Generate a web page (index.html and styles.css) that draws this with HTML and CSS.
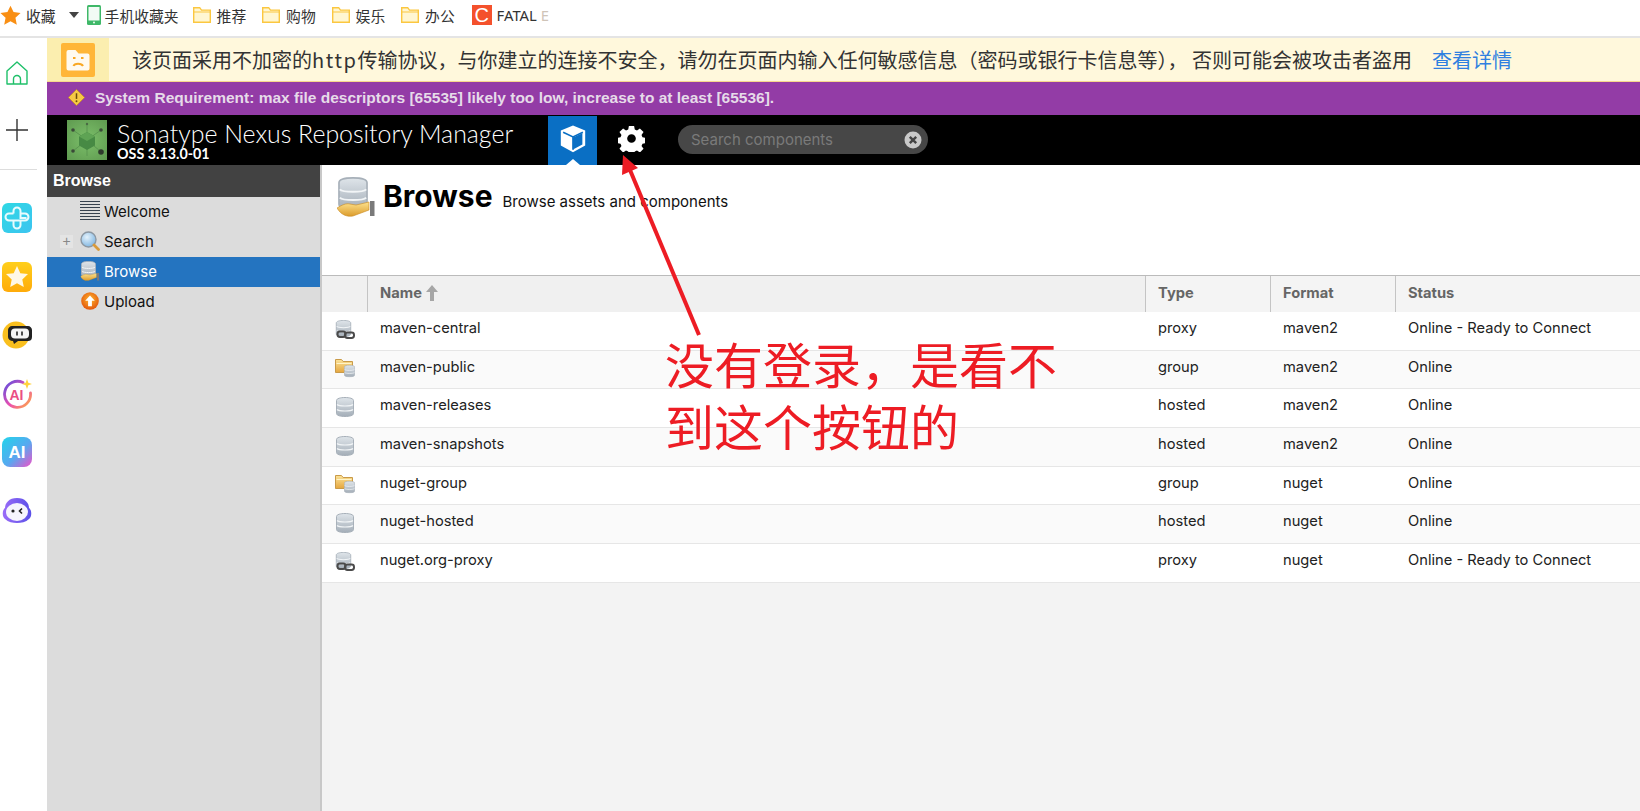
FILE: index.html
```html
<!DOCTYPE html>
<html lang="zh">
<head>
<meta charset="utf-8">
<title>Sonatype Nexus Repository Manager</title>
<link rel="stylesheet" href="styles.css">
</head>
<body>
<svg class="defs" width="0" height="0" aria-hidden="true">
  <defs>
    <linearGradient id="gDb" x1="0" y1="0" x2="0" y2="1"><stop offset="0" stop-color="#dfe5ea"/><stop offset="1" stop-color="#a4aeb8"/></linearGradient>
    <linearGradient id="gFolder" x1="0" y1="0" x2="0" y2="1"><stop offset="0" stop-color="#fbe39a"/><stop offset="1" stop-color="#e5a63e"/></linearGradient>
    <linearGradient id="gHand" x1="0" y1="0" x2="0" y2="1"><stop offset="0" stop-color="#fde28e"/><stop offset="1" stop-color="#dc9c2c"/></linearGradient>
    <linearGradient id="gTeal" x1="0" y1="0" x2="1" y2="1"><stop offset="0" stop-color="#2fd8e4"/><stop offset="1" stop-color="#3cc4f0"/></linearGradient>
    <linearGradient id="gGold" x1="0" y1="0" x2="0" y2="1"><stop offset="0" stop-color="#ffcf1c"/><stop offset="1" stop-color="#ffab0a"/></linearGradient>
    <linearGradient id="gRing" x1="0" y1="0" x2="1" y2="1"><stop offset="0" stop-color="#5a4fe0"/><stop offset=".55" stop-color="#ec4fb0"/><stop offset="1" stop-color="#ffb03c"/></linearGradient>
    <linearGradient id="gAi" x1="0" y1="0" x2="1" y2="1"><stop offset="0" stop-color="#22d4ea"/><stop offset=".55" stop-color="#58a8f0"/><stop offset="1" stop-color="#f050c8"/></linearGradient>
    <linearGradient id="gBot" x1="0" y1="0" x2="1" y2="0"><stop offset="0" stop-color="#9a6cf8"/><stop offset="1" stop-color="#5a50e8"/></linearGradient>
    <radialGradient id="gUp" cx=".5" cy=".4" r=".6"><stop offset="0" stop-color="#ffb52e"/><stop offset="1" stop-color="#e2560c"/></radialGradient>
    <radialGradient id="gLens" cx=".4" cy=".35" r=".7"><stop offset="0" stop-color="#e4f2fc"/><stop offset="1" stop-color="#7db4e0"/></radialGradient>
    <radialGradient id="gLogo" cx=".5" cy=".5" r=".7"><stop offset="0" stop-color="#7cc06a"/><stop offset="1" stop-color="#5f9a50"/></radialGradient>
    <symbol id="db" viewBox="0 0 18 20">
      <path d="M.5 3.500C.5 1.500 4.500.5 9 .5s8.500 1 8.500 3v13c0 2-4 3-8.500 3s-8.500-1-8.500-3z" fill="url(#gDb)" stroke="#a7b0b9"/>
      <path d="M1 7.500c2 2 14 2 16 0M1 12.500c2 2 14 2 16 0" fill="none" stroke="#f2f5f7" stroke-width="1.200"/>
    </symbol>
    <symbol id="proxy" viewBox="0 0 20 20">
      <use href="#db" width="17" height="17" x="0" y="0"/>
      <rect x="2.500" y="11.500" width="8" height="5.500" rx="2.400" fill="none" stroke="#4a4a4a" stroke-width="2"/>
      <rect x="10" y="12.500" width="9" height="5.500" rx="2.400" fill="none" stroke="#4a4a4a" stroke-width="2"/>
    </symbol>
    <symbol id="group" viewBox="0 0 20 20">
      <path d="M.5 1.500h6l1.600 2h9.400v11H.5z" fill="url(#gFolder)" stroke="#c99a48"/>
      <path d="M1.500 5.500h15" stroke="#fff4c8"/>
      <use href="#db" width="11" height="13" x="9" y="6.500"/>
    </symbol>
    <symbol id="store" viewBox="0 0 38 40">
      <use href="#db" width="30" height="33" x="1" y="0"/>
      <path d="M0 31c5-3 9-5 13-4l6 1 13-3v8l-8 3-8 3c-6 1-12-1-16-8z" fill="url(#gHand)" stroke="#c98a20" stroke-width=".6"/>
      <rect x="33" y="24" width="4.500" height="15" fill="#7a7a7a"/>
    </symbol>
  </defs>
</svg>

<header class="bookmarks">
  <svg class="star" viewBox="0 0 20 20"><path d="M10 .6l2.900 6.100 6.700.8-4.900 4.600 1.300 6.600L10 15.400l-6 3.300 1.300-6.600L.4 7.500l6.700-.8z" fill="#f98f14"/></svg>
  <span class="bm bm-fav">收藏</span>
  <span class="caret"></span>
  <svg class="phone" viewBox="0 0 14 20"><rect width="14" height="20" rx="1.500" fill="#3fb868"/><rect x="1.500" y="2" width="11" height="13.500" fill="#f2fbf5"/><circle cx="7" cy="17.500" r=".9" fill="#fff"/></svg>
  <span class="bm bm-mobile">手机收藏夹</span>
  <span class="bm-folder"><svg class="ficon" viewBox="0 0 18 16"><path d="M.7.7h6l1.800 2.400h8.800v12.200H.7z" fill="#fff6d2" stroke="#fbc740" stroke-width="1.400"/><path d="M1 5h16" stroke="#fbc740"/></svg>推荐</span>
  <span class="bm-folder"><svg class="ficon" viewBox="0 0 18 16"><path d="M.7.7h6l1.800 2.400h8.800v12.200H.7z" fill="#fff6d2" stroke="#fbc740" stroke-width="1.400"/><path d="M1 5h16" stroke="#fbc740"/></svg>购物</span>
  <span class="bm-folder"><svg class="ficon" viewBox="0 0 18 16"><path d="M.7.7h6l1.800 2.400h8.800v12.200H.7z" fill="#fff6d2" stroke="#fbc740" stroke-width="1.400"/><path d="M1 5h16" stroke="#fbc740"/></svg>娱乐</span>
  <span class="bm-folder"><svg class="ficon" viewBox="0 0 18 16"><path d="M.7.7h6l1.800 2.400h8.800v12.200H.7z" fill="#fff6d2" stroke="#fbc740" stroke-width="1.400"/><path d="M1 5h16" stroke="#fbc740"/></svg>办公</span>
  <span class="fatal-ic">C</span>
  <span class="fatal">FATAL <span class="fade">E</span></span>
</header>

<div class="shell">
  <aside class="rail">
    <svg class="rail-home" viewBox="0 0 22 24"><path d="M1 10L11 1l10 9v13H1z" fill="none" stroke="#1fc06a" stroke-width="1.400" stroke-linejoin="round"/><path d="M7.500 23v-5a3.500 3.500 0 017 0v5" fill="none" stroke="#1fc06a" stroke-width="1.400"/></svg>
    <svg class="rail-plus" viewBox="0 0 22 22"><path d="M11 0v22M0 11h22" stroke="#333" stroke-width="1.400"/></svg>
    <div class="rail-sep"></div>
    <div class="rail-apps">
      <svg viewBox="0 0 30 30"><rect width="30" height="30" rx="6" fill="url(#gTeal)"/><path d="M11.500 10.500V8a3.500 3.500 0 017 0v7h6a3.500 3.500 0 010 0M18.500 10.500H23a3.500 3.500 0 010 7h-5M11.500 10.500H7a3.500 3.500 0 000 7h4.500V22a3.500 3.500 0 007 0v-4.500h-7" fill="none" stroke="#e8fbfd" stroke-width="2"/></svg>
      <svg viewBox="0 0 30 30"><rect width="30" height="30" rx="6" fill="url(#gGold)"/><path d="M15 4l3.300 7.200 7.700.9-5.700 5.300 1.500 7.700L15 21.300l-6.800 3.800 1.500-7.700L4 12.100l7.700-.9z" fill="#fff8e6"/></svg>
      <svg viewBox="0 0 30 30"><circle cx="14" cy="15" r="13.500" fill="#f9bf1e"/><path d="M10 6h16c2 0 4 2 4 4v7c0 3-2 4-4 4H16l-4 3-1-3c-3 0-5-2-5-4v-7c0-2 2-4 4-4z" fill="#222"/><rect x="9" y="8.500" width="18" height="10" rx="4" fill="#f4f4f4"/><path d="M15 11.500v4M20 11.500v4" stroke="#222" stroke-width="1.600"/></svg>
      <svg viewBox="0 0 30 30"><path d="M21 3.500a13 13 0 107.500 10.500" fill="none" stroke="url(#gRing)" stroke-width="2.800" stroke-linecap="round"/><path d="M25 0l1.300 3.700L30 5l-3.700 1.300L25 10l-1.300-3.700L20 5l3.700-1.300z" fill="#ffd23c"/><text class="ai-mini" x="14.500" y="20.500">AI</text></svg>
      <svg viewBox="0 0 30 30"><rect width="30" height="30" rx="8" fill="url(#gAi)"/><text class="ai-big" x="15" y="21">AI</text></svg>
      <svg viewBox="0 0 30 30"><path d="M15 2c8 0 12 5 12 10 3 2 3 9 0 11-3 3-8 4-12 4s-9-1-12-4c-3-2-3-9 0-11C3 7 7 2 15 2z" fill="url(#gBot)"/><ellipse cx="15" cy="16" rx="11" ry="9" fill="#f6f5fd"/><circle cx="11" cy="15" r="1.600" fill="#222"/><path d="M20 12.500l-2.500 2.500 2.500 2.500" fill="none" stroke="#222" stroke-width="1.600"/></svg>
    </div>
  </aside>

  <div class="page">
    <div class="notice">
      <div class="notice-ic">
        <svg viewBox="0 0 34 34"><rect width="34" height="34" rx="2" fill="#ffb638"/><path d="M5.500 9a2 2 0 012-2h7l3 3.500h9a2 2 0 012 2v13a2 2 0 01-2 2h-19a2 2 0 01-2-2z" fill="#fffaf0"/><path d="M12 15h2.500M20 15h2.500M12.500 23c1-3 8-3 9.500 0" fill="none" stroke="#f9a825" stroke-width="2"/></svg>
      </div>
      <p class="notice-text">该页面采用不加密的<span class="http">http</span>传输协议，与你建立的连接不安全，请勿在页面内输入任何敏感信息（密码或银行卡信息等）， 否则可能会被攻击者盗用<a class="notice-link">查看详情</a></p>
    </div>

    <div class="sysreq">
      <svg viewBox="0 0 18 18"><path d="M9 .5L17.500 9 9 17.500.5 9z" fill="#f6c945" stroke="#c8961e" stroke-width=".8"/><path d="M9 4.500v6" stroke="#6b4a0a" stroke-width="1.600"/><circle cx="9" cy="13" r="1" fill="#6b4a0a"/></svg>
      <span>System Requirement: max file descriptors [65535] likely too low, increase to at least [65536].</span>
    </div>

    <div class="topbar">
      <svg class="logo" viewBox="0 0 40 40">
        <rect width="40" height="40" fill="url(#gLogo)"/>
        <path d="M20 20L20 4M20 20L6 10M20 20L34 10M20 20L6 31M20 20L33 31M20 20L20 36" stroke="#5a9650" stroke-width="1"/>
        <circle cx="20" cy="4" r="1.200" fill="#4a6a44"/><circle cx="6" cy="10" r="1.800" fill="#3a4a38"/><circle cx="34" cy="10" r="1.800" fill="#3a4a38"/><circle cx="6" cy="31" r="1.800" fill="#3a4a38"/><circle cx="34" cy="32" r="2.800" fill="#2e3a2c"/>
        <path d="M20 12l8 4.500v9L20 30l-8-4.500v-9z" fill="#478a44"/><path d="M12 16.500l8 4.500 8-4.500-8-4.500z" fill="#5ea354"/>
      </svg>
      <div class="brand">
        <div class="brand-name">Sonatype Nexus Repository Manager</div>
        <div class="brand-ver">OSS 3.13.0-01</div>
      </div>
      <div class="nav-cube">
        <svg viewBox="0 0 30 32"><path d="M15 1.500L28 7v16l-13 7-13-7V7z" fill="#fff"/><path d="M4.500 8.800l10.500 5 10.500-5M15 13.800V27.500" fill="none" stroke="#0a6fc4" stroke-width="1.800"/><path d="M15 14.500l10-4.700v12l-10 5.400z" fill="#0a6fc4"/></svg>
        <span class="nav-tick"></span>
      </div>
      <svg class="nav-gear" viewBox="0 0 28 28"><path fill-rule="evenodd" d="M11.300 1h5.400l.7 3.600 2.300 1 3-2.100 3.800 3.800-2.100 3 1 2.300 3.600.7v5.400l-3.600.7-1 2.300 2.100 3-3.800 3.800-3-2.100-2.300 1-.7 3.600h-5.400l-.7-3.600-2.300-1-3 2.100-3.800-3.800 2.100-3-1-2.300-3.600-.7v-5.400l3.600-.7 1-2.300-2.100-3 3.800-3.800 3 2.100 2.300-1zM14 9.500a4.500 4.500 0 100 9 4.500 4.500 0 000-9z" fill="#fff"/></svg>
      <div class="search">
        <span>Search components</span>
        <svg viewBox="0 0 18 18"><circle cx="9" cy="9" r="8.500" fill="#c9c9c9"/><path d="M5.800 5.800l6.400 6.400M12.200 5.800l-6.400 6.400" stroke="#444" stroke-width="2.400"/></svg>
      </div>
    </div>

    <div class="workspace">
      <nav class="side">
        <div class="side-head">Browse</div>
        <div class="tree">
          <div class="tree-row">
            <svg viewBox="0 0 20 20"><path d="M0 .5h20M0 3.500h20M0 6.500h20M0 9.500h20M0 12.500h20M0 15.500h20M0 18.500h20" stroke="#36414e" stroke-width="1.200"/></svg>
            <span>Welcome</span>
          </div>
          <div class="tree-row">
            <span class="expander">+</span>
            <svg viewBox="0 0 20 20"><circle cx="8.500" cy="8.500" r="7.500" fill="url(#gLens)" stroke="#8d98a3" stroke-width="1.400"/><path d="M14 14l4.500 4.500" stroke="#d99a3a" stroke-width="2.800" stroke-linecap="round"/></svg>
            <span>Search</span>
          </div>
          <div class="tree-row is-active">
            <svg viewBox="0 0 38 40"><use href="#store"/></svg>
            <span>Browse</span>
          </div>
          <div class="tree-row">
            <svg viewBox="0 0 20 20"><circle cx="10" cy="10" r="8.800" fill="url(#gUp)"/><path d="M10 4.500l4.800 5.200h-2.900v5.500H8.100V9.700H5.200z" fill="#fff"/></svg>
            <span>Upload</span>
          </div>
        </div>
      </nav>

      <main class="main">
        <div class="title">
          <svg class="title-ic"><use href="#store"/></svg>
          <h1>Browse</h1>
          <span class="title-sub">Browse assets and components</span>
        </div>
        <div class="grid">
          <div class="grid-row grid-head">
            <div class="cell cell-ic"></div>
            <div class="cell cell-name">Name <svg class="sort" viewBox="0 0 12 16"><path d="M6 0l6 7H8v9H4V7H0z" fill="#a6a6a6"/></svg></div>
            <div class="cell cell-alt">Type</div>
            <div class="cell cell-alt">Format</div>
            <div class="cell cell-alt">Status</div>
          </div>
          <div class="grid-row"><div class="cell cell-ic"><svg viewBox="0 0 20 20"><use href="#proxy"/></svg></div><div class="cell">maven-central</div><div class="cell">proxy</div><div class="cell">maven2</div><div class="cell">Online - Ready to Connect</div></div>
          <div class="grid-row"><div class="cell cell-ic"><svg viewBox="0 0 20 20"><use href="#group"/></svg></div><div class="cell">maven-public</div><div class="cell">group</div><div class="cell">maven2</div><div class="cell">Online</div></div>
          <div class="grid-row"><div class="cell cell-ic"><svg viewBox="0 0 20 20"><use href="#db" width="18" height="20" x="1"/></svg></div><div class="cell">maven-releases</div><div class="cell">hosted</div><div class="cell">maven2</div><div class="cell">Online</div></div>
          <div class="grid-row"><div class="cell cell-ic"><svg viewBox="0 0 20 20"><use href="#db" width="18" height="20" x="1"/></svg></div><div class="cell">maven-snapshots</div><div class="cell">hosted</div><div class="cell">maven2</div><div class="cell">Online</div></div>
          <div class="grid-row"><div class="cell cell-ic"><svg viewBox="0 0 20 20"><use href="#group"/></svg></div><div class="cell">nuget-group</div><div class="cell">group</div><div class="cell">nuget</div><div class="cell">Online</div></div>
          <div class="grid-row"><div class="cell cell-ic"><svg viewBox="0 0 20 20"><use href="#db" width="18" height="20" x="1"/></svg></div><div class="cell">nuget-hosted</div><div class="cell">hosted</div><div class="cell">nuget</div><div class="cell">Online</div></div>
          <div class="grid-row"><div class="cell cell-ic"><svg viewBox="0 0 20 20"><use href="#proxy"/></svg></div><div class="cell">nuget.org-proxy</div><div class="cell">proxy</div><div class="cell">nuget</div><div class="cell">Online - Ready to Connect</div></div>
        </div>
      </main>
    </div>
  </div>
</div>

<svg class="arrow" viewBox="0 0 100 200"><path d="M79 183L10 18" stroke="#ed1c24" stroke-width="4" fill="none"/><path d="M3 3L18 16 2 23z" fill="#ed1c24"/></svg>
<div class="note">没有登录，是看不<br>到这个按钮的</div>
</body>
</html>
```

FILE: styles.css
```css
* { box-sizing: border-box; }
html, body { margin: 0; height: 100%; overflow: hidden; }
body { font-family: Inter, "Noto Sans CJK SC", sans-serif; background: #fff; color: #111; position: relative; }
.defs { position: absolute; }

.bookmarks { height: 38px; display: flex; align-items: center; border-bottom: 2px solid #e4e4e4; padding-bottom: 6px; font-family: "Noto Sans CJK SC", sans-serif; font-size: 14.800px; color: #333; white-space: nowrap; }
.star { width: 21px; height: 21px; flex: none; }
.bm-fav { margin-left: 5px; }
.caret { width: 0; height: 0; margin: 0 8px 0 13px; border: 5px solid transparent; border-top: 6px solid #444; border-bottom: 0; }
.phone { width: 14px; height: 20px; flex: none; }
.bm-mobile { margin-left: 4px; width: 88px; }
.bm-folder { display: flex; align-items: center; gap: 6px; width: 69.500px; }
.ficon { width: 18px; height: 16px; }
.fatal-ic { width: 20px; height: 20px; background: #f4512c; color: #fff; font: 20px/20px "Liberation Sans", sans-serif; text-align: center; margin-left: 1px; }
.fatal { margin-left: 5px; font-family: "Noto Sans", sans-serif; }
.fade { color: #cfc4b8; }

.shell { display: flex; height: calc(100vh - 38px); }
.rail { width: 47px; flex: none; display: flex; flex-direction: column; align-items: flex-start; background: #fff; padding-top: 23px; }
.rail-home { width: 22px; height: 24px; margin-left: 6px; }
.rail-plus { width: 22px; height: 22px; margin-top: 34px; margin-left: 6px; }
.rail-sep { width: 37px; height: 1px; background: #ddd; margin-top: 28px; }
.rail-apps { display: flex; flex-direction: column; gap: 28.600px; margin-top: 33px; margin-left: 2px; }
.rail-apps svg { width: 30px; height: 30px; display: block; }
.ai-mini { font: 700 14px "Liberation Sans", sans-serif; fill: #ea4f84; text-anchor: middle; }
.ai-big { font: 700 17px "Liberation Sans", sans-serif; fill: #fff; text-anchor: middle; }

.page { flex: 1; min-width: 0; display: flex; flex-direction: column; }
.notice { height: 44px; flex: none; display: flex; background: #fff8dc; border-bottom: 1px solid #f6d88e; }
.notice-ic { width: 62px; background: #fbeeaf; display: flex; align-items: center; justify-content: center; }
.notice-ic svg { width: 34px; height: 34px; }
.notice-text { margin: 0 0 0 23px; font: 20px/43px "Noto Sans CJK SC", sans-serif; color: #333; white-space: nowrap; }
.http { letter-spacing: 1.600px; }
.notice-link { color: #2f7fe0; margin-left: 20px; }

.sysreq { height: 33px; flex: none; background: #933ca6; color: #e6dbe9; display: flex; align-items: center; gap: 10px; padding: 0 0 2px 21px; font: 700 15.500px "Liberation Sans", Arial, sans-serif; }
.sysreq svg { width: 17px; height: 17px; }

.topbar { height: 50px; flex: none; background: #000; display: flex; align-items: center; padding-left: 20px; }
.logo { width: 40px; height: 40px; flex: none; }
.brand { width: 430px; margin-left: 10px; color: #fff; flex: none; }
.brand-name { font: 300 24.900px/26px Lato, sans-serif; white-space: nowrap; }
.brand-ver { font: 700 14.300px/14px Lato, sans-serif; margin-top: 1px; }
.nav-cube { width: 49px; height: 49px; margin: 1px 0 0 1px; background: #0a6fc4; display: flex; flex-direction: column; align-items: center; justify-content: flex-end; flex: none; }
.nav-cube svg { width: 30px; height: 30px; margin-bottom: 5px; }
.nav-tick { width: 0; height: 0; border: 7px solid transparent; border-bottom: 6px solid #fff; border-top: 0; }
.nav-gear { width: 27px; height: 27px; margin: 0 0 3px 21px; flex: none; }
.search { width: 250px; height: 29px; margin: 0 0 1px 33px; border-radius: 15px; background: #474747; display: flex; align-items: center; justify-content: space-between; padding: 0 6px 0 13px; color: #7a7a7a; font-size: 15px; flex: none; }
.search svg { width: 18px; height: 18px; }

.workspace { flex: 1; display: flex; min-height: 0; }
.side { width: 273px; flex: none; background: #dcdcdc; }
.side-head { height: 32px; background: #424242; color: #fff; font: 700 16px/32px "Liberation Sans", Arial, sans-serif; padding-left: 6px; }
.tree-row { height: 30px; display: flex; align-items: center; padding: 0 0 2px 33px; font-size: 15px; color: #111; position: relative; }
.tree-row svg { width: 20px; height: 20px; margin-right: 4px; flex: none; }
.tree-row.is-active { background: #2474c0; color: #fff; }
.expander { position: absolute; left: 13px; top: 8px; width: 13px; height: 13px; background: #e4e4e4; color: #888; font: 14px/13px "Liberation Sans", sans-serif; text-align: center; }

.main { flex: 1; min-width: 0; background: #f3f3f3; border-left: 2px solid #c8c8c8; }
.title { height: 110px; background: #fff; display: flex; align-items: flex-start; padding: 12px 0 0 15px; }
.title-ic { width: 38px; height: 40px; flex: none; }
.title h1 { margin: 1px 0 0 8px; font: 700 30px/36px Inter, sans-serif; color: #000; }
.title-sub { margin: 15px 0 0 10px; font-size: 15px; line-height: 20px; color: #111; }

.grid { border-top: 1px solid #bbb; }
.grid-row { display: grid; grid-template-columns: 45px 778px 125px 125px 1fr; height: 38.700px; background: #fff; border-bottom: 1px solid #e6e6e6; font-size: 14.700px; align-items: start; color: #222; }
.grid-row:nth-child(odd) { background: #fafafa; }
.grid-head { height: 36px; background: #f0f0f0 !important; border: 0; color: #666; font-weight: 700; font-size: 14.700px; }
.cell { padding: 6px 12px 0 13px; white-space: nowrap; line-height: 20px; }
.grid-head .cell { height: 36px; padding: 7px 12px 0; border-left: 1px solid #c4c4c4; display: flex; align-items: flex-start; gap: 4px; }
.grid-head .cell-ic { border-left: 0; }
.grid-head .cell-alt { background: #f4f4f4; }
.grid-row .cell-ic { padding: 7.500px 0 0 13px; }
.cell-ic svg { width: 20px; height: 20px; display: block; }
.sort { width: 12px; height: 16px; margin-top: 2px; }

.arrow { position: absolute; left: 620px; top: 152px; width: 100px; height: 200px; }
.note { position: absolute; left: 665px; top: 332px; font: 49px/62px "Noto Sans CJK SC", sans-serif; color: #ed1c24; white-space: nowrap; }
```
